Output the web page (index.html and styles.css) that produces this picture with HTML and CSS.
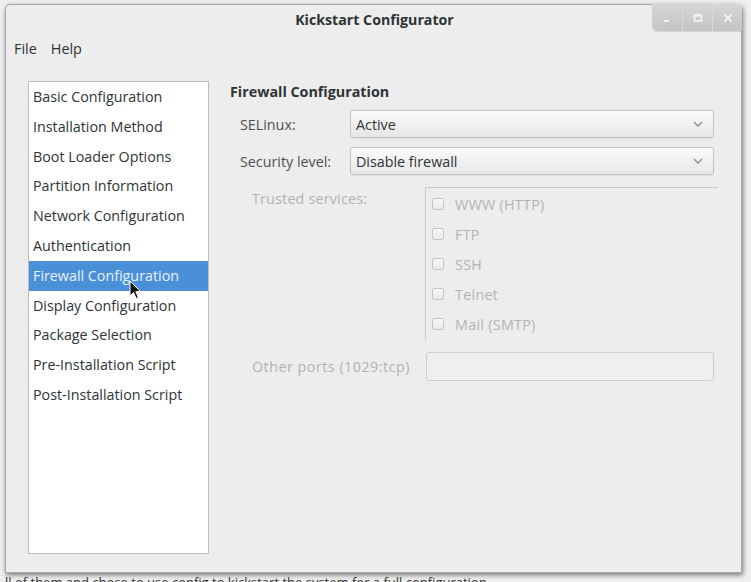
FILE: index.html
```html
<!DOCTYPE html>
<html>
<head>
<meta charset="utf-8">
<title>Kickstart Configurator</title>
<link rel="stylesheet" href="styles.css">
</head>
<body>
<div class="desktop">
  <div class="window">
    <div class="titlebar">
      <span></span>
      <span class="title">Kickstart Configurator</span>
      <div class="wm-buttons">
        <div class="wm-btn"><svg width="10" height="10" viewBox="0 0 10 10"><rect x="2" y="7" width="5" height="2" fill="#f4f4f4"/></svg></div>
        <div class="wm-btn"><svg width="10" height="10" viewBox="0 0 10 10"><rect x="1.5" y="2" width="7" height="6" fill="none" stroke="#f4f4f4" stroke-width="1.6"/><rect x="1" y="1.5" width="8" height="2" fill="#f4f4f4"/></svg></div>
        <div class="wm-btn"><svg width="10" height="10" viewBox="0 0 10 10"><path d="M1.5 1.5 L8.5 8.5 M8.5 1.5 L1.5 8.5" stroke="#f4f4f4" stroke-width="1.8"/></svg></div>
      </div>
    </div>
    <div class="menubar">
      <span class="menu-item">File</span>
      <span class="menu-item">Help</span>
    </div>
    <div class="main">
      <ul class="nav">
        <li>Basic Configuration</li>
        <li>Installation Method</li>
        <li>Boot Loader Options</li>
        <li>Partition Information</li>
        <li>Network Configuration</li>
        <li>Authentication</li>
        <li class="selected">Firewall Configuration</li>
        <li>Display Configuration</li>
        <li>Package Selection</li>
        <li>Pre-Installation Script</li>
        <li>Post-Installation Script</li>
        <svg class="cursor" width="13" height="20" viewBox="0 0 13 20"><path d="M1 1 L1 16 L4.5 12.5 L7.2 18.5 L9.4 17.5 L6.8 11.6 L11.5 11.6 Z" fill="#111" stroke="#fff" stroke-width="1" stroke-linejoin="round"/></svg>
      </ul>
      <section class="panel">
        <h2 class="heading">Firewall Configuration</h2>
        <div class="form-row">
          <span class="label">SELinux:</span>
          <div class="combo"><span>Active</span><svg class="chev" width="10" height="6" viewBox="0 0 10 6"><path d="M1 1 L5 5 L9 1" fill="none" stroke="#8a8a8a" stroke-width="1.3"/></svg></div>
        </div>
        <div class="form-row">
          <span class="label">Security level:</span>
          <div class="combo"><span>Disable firewall</span><svg class="chev" width="10" height="6" viewBox="0 0 10 6"><path d="M1 1 L5 5 L9 1" fill="none" stroke="#8a8a8a" stroke-width="1.3"/></svg></div>
        </div>
        <div class="trusted-row">
          <span class="dlabel trusted-label">Trusted services:</span>
          <div class="services">
            <label class="service"><span class="check"></span>WWW (HTTP)</label>
            <label class="service"><span class="check"></span>FTP</label>
            <label class="service"><span class="check"></span>SSH</label>
            <label class="service"><span class="check"></span>Telnet</label>
            <label class="service"><span class="check"></span>Mail (SMTP)</label>
          </div>
        </div>
        <div class="ports-row">
          <span class="dlabel">Other ports (1029:tcp)</span>
          <div class="entry"></div>
        </div>
      </section>
    </div>
  </div>
  <div class="under-text">ll of them and chose to use config to kickstart the system for a full configuration</div>
</div>
</body>
</html>
```

FILE: styles.css
```css
* { box-sizing: border-box; }
html, body { margin: 0; padding: 0; }
body {
  width: 751px;
  height: 582px;
  overflow: hidden;
  background: #efefef;
  font-family: "Open Sans", "Noto Sans", sans-serif;
  color: #2e3436;
}
.desktop {
  padding: 4px 0 0 5px;
}
.window {
  width: 737px;
  height: 569px;
  background: #ededed;
  border: 1px solid #a6a6a6;
  border-radius: 5px 5px 0 0;
  box-shadow: 1px 2px 5px rgba(0,0,0,0.5);
  display: flex;
  flex-direction: column;
}
.titlebar {
  height: 28px;
  display: grid;
  grid-template-columns: 1fr auto 1fr;
  align-items: center;
}
.title {
  font-weight: 700;
  font-size: 14.2px;
  color: #2e3436;
  padding-left: 2px;
}
.wm-buttons {
  justify-self: end;
  align-self: start;
  display: flex;
  height: 27px;
  margin-right: -1px;
  margin-top: -1px;
  background: linear-gradient(#d6d6d6, #c4c4c4);
  border-bottom-left-radius: 6px;
  box-shadow: 0 1px 1px rgba(0,0,0,0.12);
}
.wm-btn {
  width: 30px;
  display: flex;
  align-items: center;
  justify-content: center;
  border-left: 1px solid #d9d9d9;
}
.wm-btn:first-child { border-left: none; width: 30px; }
.menubar {
  height: 30px;
  display: flex;
  align-items: center;
  padding-left: 8px;
  gap: 14px;
  font-size: 14.4px;
}
.main {
  flex: 1;
  display: flex;
  padding: 18px 27px 18px 22px;
  gap: 21px;
}
.nav {
  position: relative;
  list-style: none;
  margin: 0;
  padding: 0;
  width: 181px;
  flex: none;
  background: #fff;
  border: 1px solid #bdbdbd;
  font-size: 14.3px;
  color: #2e3436;
}
.nav li {
  height: 29.8px;
  line-height: 29.8px;
  padding-left: 4px;
  white-space: nowrap;
}
.nav li.selected {
  background: #4a90d9;
  color: #eaf2fb;
}
.cursor {
  position: absolute;
  left: 100px;
  top: 198px;
}
.panel {
  flex: 1;
  padding-top: 1px;
}
.heading {
  margin: 0 0 8px 0;
  height: 20px;
  line-height: 20px;
  font-size: 14.3px;
  font-weight: 700;
  color: #2e3436;
}
.form-row {
  display: flex;
  align-items: center;
  padding-left: 10px;
  margin-bottom: 9px;
}
.label {
  width: 110px;
  font-size: 14.3px;
  color: #4c5053;
}
.combo {
  width: 364px;
  height: 28px;
  border: 1px solid #c2c2c2;
  border-radius: 3px;
  background: linear-gradient(#fbfbfb, #e6e6e6);
  box-shadow: 0 1px 1px rgba(0,0,0,0.06);
  display: flex;
  align-items: center;
  justify-content: space-between;
  padding: 0 10px 0 5px;
  font-size: 14.3px;
  color: #2e3436;
}
.trusted-row {
  display: flex;
  padding-left: 22px;
  margin-top: 12px;
  margin-right: -4px;
}
.dlabel {
  font-size: 14.3px;
  color: #b3b3b3;
  letter-spacing: 0.2px;
}
.trusted-label {
  width: 173px;
  margin-top: 2px;
  line-height: 20px;
  height: 20px;
}
.services {
  flex: 1;
  height: 153px;
  border-top: 1px solid #c9c9c9;
  border-left: 1px solid #c9c9c9;
  padding-top: 1px;
  padding-left: 6px;
}
.service {
  display: flex;
  align-items: center;
  height: 30px;
  font-size: 14.3px;
  letter-spacing: 0.3px;
  color: #b3b3b3;
}
.check {
  width: 12px;
  height: 12px;
  border: 1px solid #c6c6c6;
  border-radius: 2px;
  background: linear-gradient(#f7f7f7, #ebebeb);
  margin-right: 11px;
  flex: none;
}
.ports-row {
  display: flex;
  align-items: center;
  padding-left: 22px;
  margin-top: 12px;
}
.ports-row .dlabel {
  width: 174px;
  letter-spacing: 0.5px;
}
.entry {
  width: 288px;
  height: 29px;
  border: 1px solid #cdcdcd;
  border-radius: 3px;
  background: #efefef;
}
.under-text {
  margin-top: 3px;
  font-size: 13px;
  line-height: 13px;
  color: #333;
  white-space: nowrap;
}
```
